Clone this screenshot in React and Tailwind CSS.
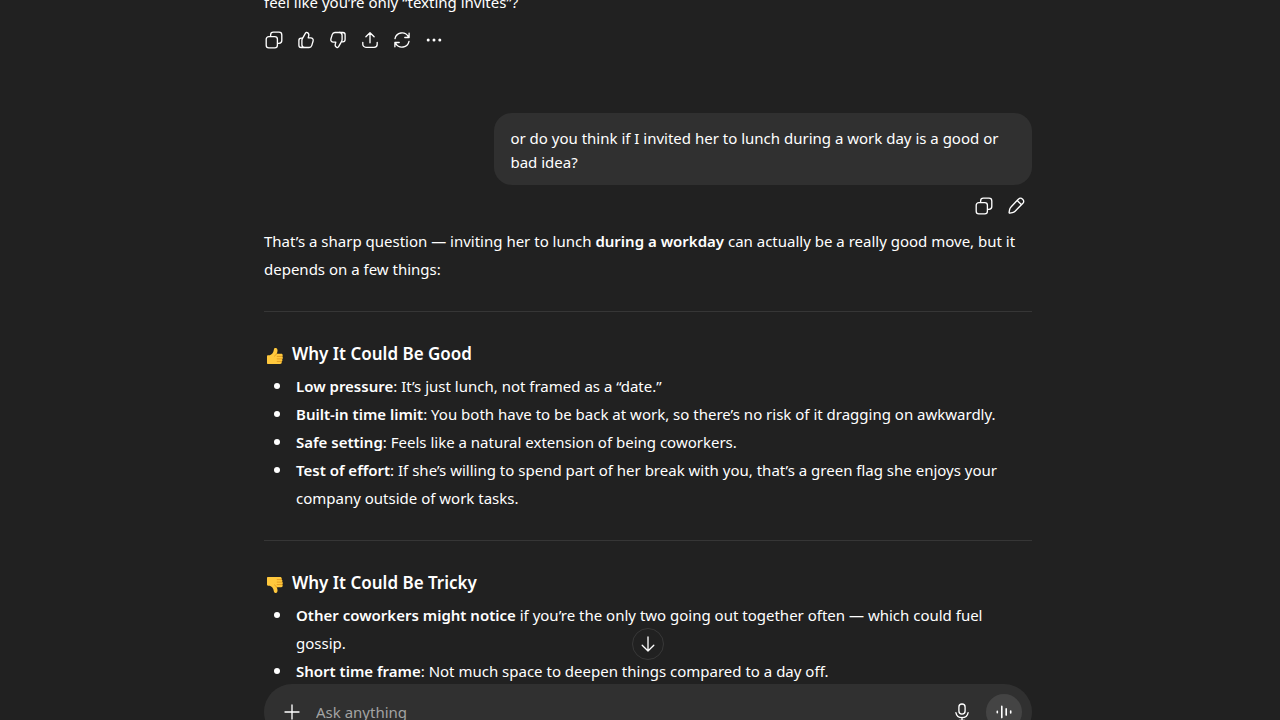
import React, { useState } from 'react';

const Icon = ({ children, className = 'w-5 h-5' }) => (
  <svg
    viewBox="0 0 20 20"
    className={className}
    fill="none"
    stroke="currentColor"
    strokeWidth="1.33"
    strokeLinecap="round"
    strokeLinejoin="round"
    aria-hidden="true"
  >
    {children}
  </svg>
);

const CopyIcon = () => (
  <Icon>
    <rect x="2.2" y="6.6" width="11.2" height="11.2" rx="2.6" />
    <path d="M6.6 6.4V5A2.8 2.8 0 0 1 9.4 2.2H15A2.8 2.8 0 0 1 17.8 5v5.6a2.8 2.8 0 0 1-2.8 2.8h-1.4" />
  </Icon>
);

const thumbPath = 'M6.4 8.7 9.5 3.2c.3-.6.9-.9 1.5-.7 1.3.3 2.1 1.5 1.8 2.8l-.6 2.6h2.6c1.7 0 2.8 1.5 2.3 3.1l-1.3 4.4c-.4 1.3-1.3 2.1-2.7 2.1H8.7c-1.7 0-2.8-1.2-2.8-2.8v-4.2c0-.7.2-1.3.5-1.8Zm-.2-.5H5.1a2.2 2.2 0 0 0-2.2 2.2v4.9a2.2 2.2 0 0 0 2.2 2.2h3.4';

const ThumbUpIcon = () => (
  <Icon>
    <path d={thumbPath} />
  </Icon>
);

const ThumbDownIcon = () => (
  <Icon>
    <g transform="rotate(180 10 10)">
      <path d={thumbPath} />
    </g>
  </Icon>
);

const ShareIcon = () => (
  <Icon>
    <path d="M10 12.8V2.8M5.9 6.8 10 2.7l4.1 4.1M2.8 12.3v1.9a3.1 3.1 0 0 0 3.1 3.1h8.2a3.1 3.1 0 0 0 3.1-3.1v-1.9" />
  </Icon>
);

const RetryIcon = () => (
  <Icon>
    <path d="M3 8.6A7.2 7.2 0 0 1 16.2 6.4L17 7.5M17.1 3.2v4.3h-4.3M17 11.4A7.2 7.2 0 0 1 3.8 13.6L3 12.5M2.9 16.8v-4.3h4.3" />
  </Icon>
);

const MoreIcon = () => (
  <Icon>
    <g fill="currentColor" stroke="none">
      <circle cx="4.2" cy="10" r="1.5" />
      <circle cx="10" cy="10" r="1.5" />
      <circle cx="15.8" cy="10" r="1.5" />
    </g>
  </Icon>
);

const PencilIcon = () => (
  <Icon>
    <path d="M11.3 4.3 12.6 3a2.6 2.6 0 0 1 3.8 0l.5.5a2.6 2.6 0 0 1 0 3.8l-7.8 7.9a5 5 0 0 1-2.7 1.4l-2.6.5a.6.6 0 0 1-.7-.7l.5-2.7A5 5 0 0 1 5 11l6.3-6.7ZM11.2 4.5l4.3 4.2" />
  </Icon>
);

const PlusIcon = () => (
  <Icon>
    <path d="M10 3v14M3 10h14" />
  </Icon>
);

const MicIcon = () => (
  <Icon>
    <rect x="6.9" y="2" width="6.2" height="10.2" rx="3.1" />
    <path d="M3.9 10.6a6.2 6.2 0 0 0 12.2 0M10 15.5v2.8M7.4 18.3h5.2" />
  </Icon>
);

const VoiceIcon = () => (
  <Icon>
    <path strokeWidth="1.6" d="M3.3 9.3v1.4M7.8 4.4v11.2M12.2 6.9v6.2M16.7 9.1v1.8" />
  </Icon>
);

const ArrowDownIcon = () => (
  <Icon>
    <path d="M10 3v14M4.2 11.2 10 17l5.8-5.8" />
  </Icon>
);

const EmojiThumb = ({ down }) => (
  <svg viewBox="0 0 18 18" className="w-[18px] h-[18px] mt-1 shrink-0" role="img" aria-label={down ? 'Thumbs down' : 'Thumbs up'}>
    <g transform={down ? 'matrix(1 0 0 -1 0 18)' : undefined}>
      <path
        fill="#ffc83d"
        d="M1 9.4c0-.7.4-1.1 1-1.1h1.8c1.9-.8 3.2-2.1 3.7-4l.4-1.9c.2-1 .9-1.5 1.9-1.3 1.3.3 1.9 1.4 1.7 3-.1 1-.4 1.9-.8 2.7h4.5c.9 0 1.5.6 1.5 1.4 0 .6-.2 1-.6 1.3.6.3.8.8.7 1.4 0 .6-.3 1.1-.8 1.3.4.3.5.7.4 1.3-.1.5-.4.9-.8 1.1.2.3.2.7.1 1.1-.2.8-.8 1.2-1.6 1.2H2c-.6 0-1-.4-1-1V9.4Z"
      />
      <path fill="none" stroke="#d68b16" strokeWidth=".7" strokeLinecap="round" d="M11.2 9.4h5M11.2 11.9h4.8M11.2 14.4h4.3M10.6 6.8c-.6 1.1-1.3 1.8-2 2.2" />
    </g>
  </svg>
);

const IconButton = ({ label, children, onClick }) => (
  <button
    type="button"
    aria-label={label}
    onClick={onClick}
    className="w-8 h-8 flex items-center justify-center rounded-lg hover:bg-white/10"
  >
    {children}
  </button>
);

const Section = ({ title, down, items }) => (
  <section>
    <h3 className="flex items-center gap-2 pl-0.5 mb-1 text-[17px] leading-7 font-semibold">
      <EmojiThumb down={down} />
      {title}
    </h3>
    <ul>
      {items.map((item) => (
        <li key={item.lead} className="flex pr-2">
          <span className="w-8 h-7 pl-2.5 shrink-0 flex items-center">
            <span className="w-1.5 h-1.5 rounded-full bg-white" />
          </span>
          <p>
            <strong className="font-semibold">{item.lead}</strong>
            {item.text}
          </p>
        </li>
      ))}
    </ul>
  </section>
);

const good = [
  { lead: 'Low pressure', text: ': It’s just lunch, not framed as a “date.”' },
  { lead: 'Built-in time limit', text: ': You both have to be back at work, so there’s no risk of it dragging on awkwardly.' },
  { lead: 'Safe setting', text: ': Feels like a natural extension of being coworkers.' },
  { lead: 'Test of effort', text: ': If she’s willing to spend part of her break with you, that’s a green flag she enjoys your company outside of work tasks.' },
];

const tricky = [
  { lead: 'Other coworkers might notice', text: ' if you’re the only two going out together often — which could fuel gossip.' },
  { lead: 'Short time frame', text: ': Not much space to deepen things compared to a day off.' },
];

const Composer = () => {
  const [message, setMessage] = useState('');

  return (
    <form
      onSubmit={(e) => e.preventDefault()}
      className="w-full h-14 px-2.5 flex items-center gap-1.5 rounded-[28px] bg-[#303030]"
    >
      <button type="button" aria-label="Add files" className="w-9 h-9 flex items-center justify-center rounded-full hover:bg-white/10">
        <PlusIcon />
      </button>
      <input
        type="text"
        aria-label="Message"
        placeholder="Ask anything"
        value={message}
        onChange={(e) => setMessage(e.target.value)}
        className="flex-1 min-w-0 bg-transparent outline-none placeholder:text-[#a3a3a3]"
      />
      <button type="button" aria-label="Dictate" className="w-9 h-9 flex items-center justify-center rounded-full hover:bg-white/10">
        <MicIcon />
      </button>
      <button type="button" aria-label="Voice mode" className="w-9 h-9 flex items-center justify-center rounded-full bg-[#444444]">
        <VoiceIcon />
      </button>
    </form>
  );
};

const App = () => {
  return (
    <div className="relative h-screen overflow-hidden bg-[#212121] text-white text-[15px] leading-7 font-['Noto_Sans','Open_Sans',sans-serif]">
      <main className="pl-4">
        <div className="max-w-3xl mx-auto">
          {/* Previous answer, scrolled mostly out of view */}
          <p className="-mt-3">feel like you’re only “texting invites”?</p>
          <div className="flex -ml-1.5 mt-2">
            <IconButton label="Copy"><CopyIcon /></IconButton>
            <IconButton label="Good response"><ThumbUpIcon /></IconButton>
            <IconButton label="Bad response"><ThumbDownIcon /></IconButton>
            <IconButton label="Share"><ShareIcon /></IconButton>
            <IconButton label="Try again"><RetryIcon /></IconButton>
            <IconButton label="More actions"><MoreIcon /></IconButton>
          </div>

          {/* User message */}
          <div className="mt-[57px] flex flex-col items-end">
            <div className="max-w-[70%] px-4 pt-[13px] pb-[11px] rounded-[18px] bg-[#303030] leading-6">
              or do you think if I invited her to lunch during a work day is a good or bad idea?
            </div>
            <div className="flex mt-[5px]">
              <IconButton label="Copy message"><CopyIcon /></IconButton>
              <IconButton label="Edit message"><PencilIcon /></IconButton>
            </div>
          </div>

          {/* Answer */}
          <article className="mt-[5px]">
            <p>
              That’s a sharp question — inviting her to lunch <strong className="font-semibold">during a workday</strong> can
              actually be a really good move, but it depends on a few things:
            </p>
            <hr className="my-7 border-[#363636]" />
            <Section title="Why It Could Be Good" items={good} />
            <hr className="my-7 border-[#363636]" />
            <Section title="Why It Could Be Tricky" down items={tricky} />
          </article>
        </div>
      </main>

      {/* Composer, floats over the thread */}
      <footer className="absolute inset-x-0 -bottom-5 pl-4">
        <div className="max-w-3xl mx-auto flex flex-col items-center gap-6">
          <button
            type="button"
            aria-label="Scroll to bottom"
            className="w-8 h-8 flex items-center justify-center rounded-full border border-[#383838] bg-[#212121]"
          >
            <ArrowDownIcon />
          </button>
          <Composer />
        </div>
      </footer>
    </div>
  );
};

export default App;
